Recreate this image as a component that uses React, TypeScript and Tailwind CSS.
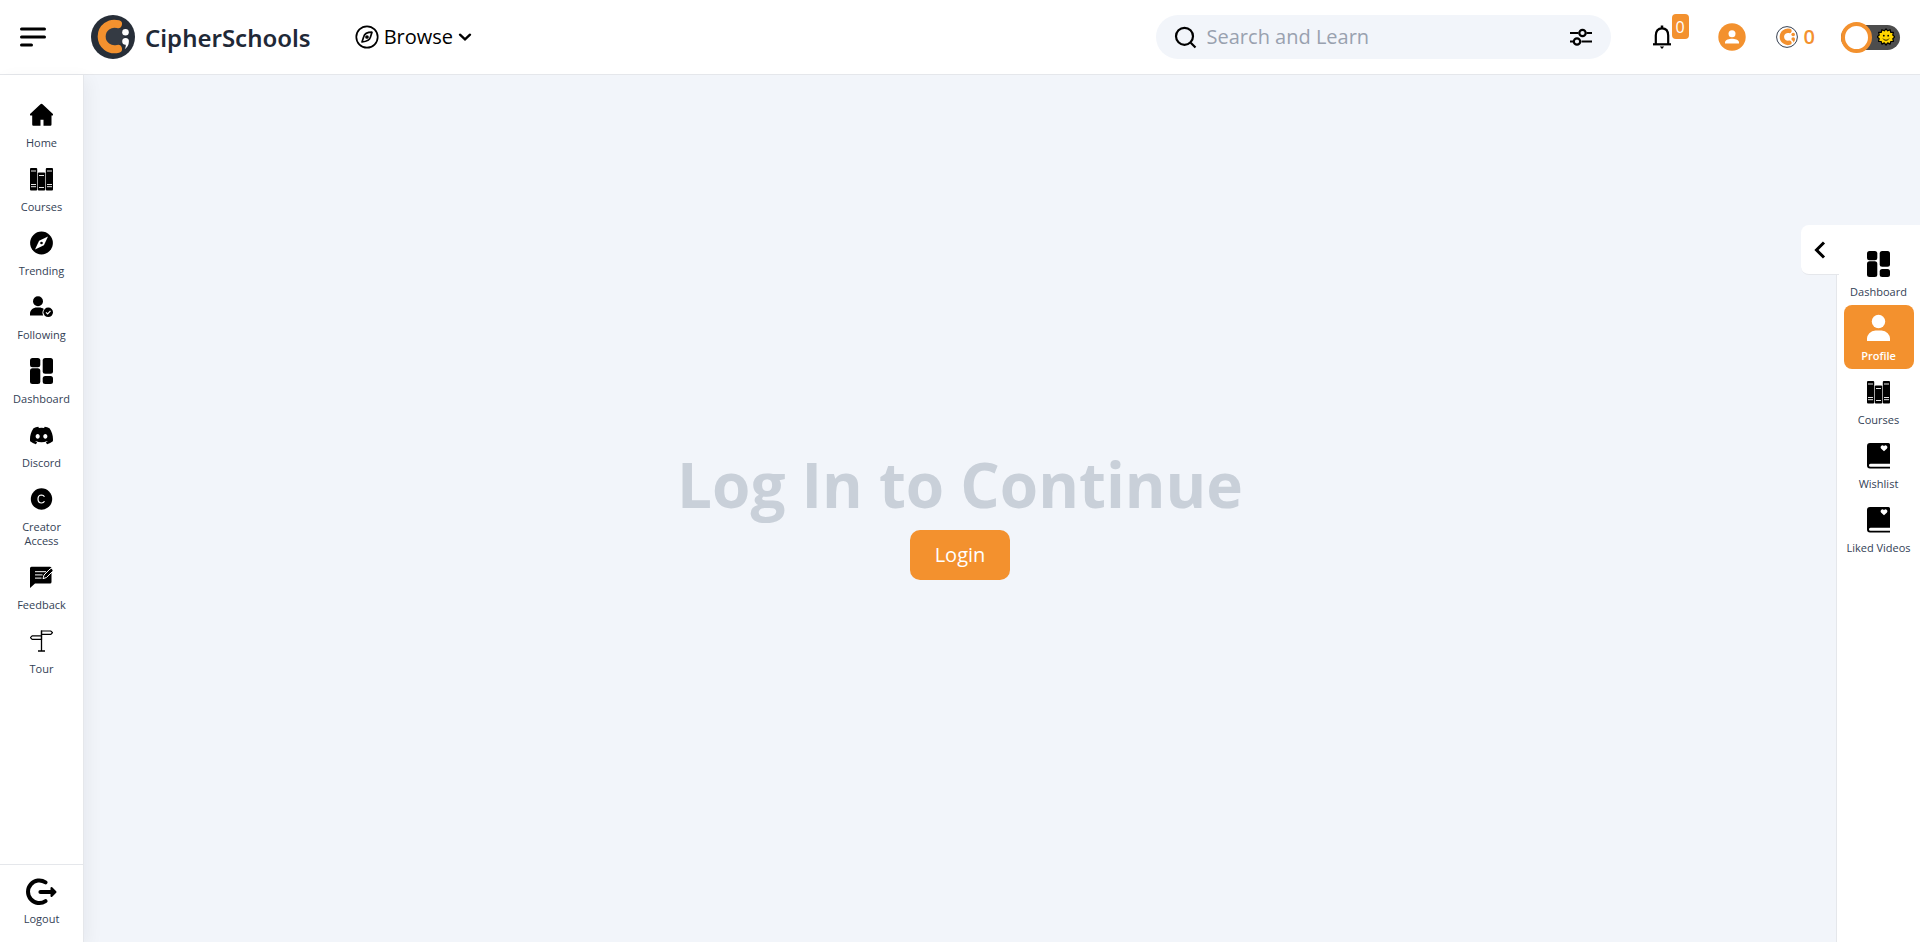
import type { ReactNode } from "react";
import { BsDiscord } from "react-icons/bs";

type Item = { label: string; icon: ReactNode; active?: boolean };

const HomeIcon = () => (
  <svg width="23" height="24" viewBox="0.5 0 23 24" aria-hidden="true">
    <path d="M10.700 1.400a1.900 1.900 0 0 1 2.600 0l9.900 9.400c.6.700.4 1.700-.5 1.700H22v9a1.200 1.200 0 0 1-1.200 1.200H14v-6h-3v6H3.900a1.200 1.200 0 0 1-1.200-1.200v-9h-1.400c-.9 0-1.100-1-.5-1.700z" />
  </svg>
);

const BooksIcon = () => (
  <svg width="23" height="24" viewBox="0.5 0 23 24" aria-hidden="true">
    <rect x="0.500" y="1" width="7.200" height="22.500" rx="1" />
    <rect x="8.300" y="5.500" width="7.400" height="18" rx="1" />
    <rect x="16.300" y="1" width="7.200" height="22.500" rx="1" />
    <path d="M1.500 4h5M17.500 4h5M9.500 8.500h5M1.500 17.500h5M17.500 17.500h5M1.500 19.700h5M17.500 19.700h5M9.500 20.500h5" stroke="#fff" strokeWidth="0.900" />
  </svg>
);

const TrendingIcon = () => (
  <svg width="23" height="24" viewBox="0.5 0 23 24" aria-hidden="true">
    <circle cx="12" cy="12" r="11.400" />
    <path d="M18.500 5.500 14.400 14.300 5.500 18.500 9.600 9.700z" fill="#fff" />
    <circle cx="12" cy="12" r="1.300" />
  </svg>
);

const FollowingIcon = () => (
  <svg width="23" height="24" viewBox="0.5 0 23 24" aria-hidden="true">
    <circle cx="8.500" cy="6.300" r="5" />
    <path d="M.5 20.500v-1.500C.5 15 3.500 12.500 7.500 12.500h2c2 0 3.500.5 4.800 1.500A6 6 0 0 0 13.700 20.500z" />
    <circle cx="18.700" cy="17.300" r="4.800" />
    <path d="m16.500 17.400 1.600 1.500 2.900-3" fill="none" stroke="#fff" strokeWidth="1.200" />
  </svg>
);

const DashboardIcon = () => (
  <svg width="23" height="28" viewBox="0.5 0 23 28" aria-hidden="true">
    <rect x="0.500" y="1" width="10.300" height="9.200" rx="2.500" />
    <rect x="0.500" y="11.300" width="10.300" height="15.700" rx="2.500" />
    <rect x="13.200" y="1" width="10.300" height="15.700" rx="2.500" />
    <rect x="13.200" y="19" width="10.300" height="8" rx="2.500" />
  </svg>
);

const CreatorIcon = () => (
  <svg width="23" height="24" viewBox="0.5 0 23 24" aria-hidden="true">
    <circle cx="12" cy="12" r="10.700" />
    <path d="M15 9.700A3.700 3.700 0 0 0 12.100 8C10 8 8.500 9.600 8.500 12s1.500 4 3.600 4A3.700 3.700 0 0 0 15 14.300" fill="none" stroke="#fff" strokeWidth="1.200" />
  </svg>
);

const FeedbackIcon = () => (
  <svg width="23" height="24" viewBox="0.5 0 23 24" aria-hidden="true">
    <path d="M2 1.700h18.500A1.500 1.500 0 0 1 22 3.200V17a1.500 1.500 0 0 1-1.500 1.500H5.500L.5 23V3.200A1.500 1.500 0 0 1 2 1.700z" />
    <path d="M5.500 6.700h11M5.500 9.900h7.500M5.500 13.100h6.500" stroke="#fff" strokeWidth="1" />
    <path d="m13.500 13.700 1-3.700 6-6a1.700 1.700 0 0 1 2.500 2.500l-6 6z" stroke="#fff" strokeWidth="1" />
  </svg>
);

const TourIcon = () => (
  <svg width="23" height="24" viewBox="0.5 0 23 24" fill="none" stroke="#000" aria-hidden="true">
    <path d="M12 1.500v21M8.500 22h7" strokeWidth="1.300" />
    <path d="M12 2h9.300l1.700 1.700-1.700 1.700H12zM12 6.900H2.700L1 8.600l1.700 1.700H12z" strokeWidth="1.200" />
  </svg>
);

const ProfileIcon = () => (
  <svg width="23" height="28" viewBox="0.5 0 23 28" fill="#fff" aria-hidden="true">
    <circle cx="12" cy="7.500" r="6.700" />
    <path d="M.5 27V25.500A8.500 8.500 0 0 1 9 16.500h6a8.500 8.500 0 0 1 8.500 9V27z" />
  </svg>
);

const BookHeartIcon = () => (
  <svg width="23" height="28" viewBox="0.5 0 23 28" aria-hidden="true">
    <path d="M3.500 1H22a1.500 1.500 0 0 1 1.500 1.500V21.700H4a1.400 1.400 0 0 0 0 3.100h19.500V26.500H3.500a3 3 0 0 1-3-3V4a3 3 0 0 1 3-3z" />
    <path d="M17.500 9.200 14.500 6.500a1.800 1.800 0 0 1 3-2.300 1.800 1.800 0 0 1 3 2.300z" fill="#fff" />
  </svg>
);

const LogoutIcon = () => (
  <svg width="31" height="28" viewBox="0.5 0 31 28" fill="none" stroke="#000" strokeLinecap="round" aria-hidden="true">
    <path d="M20 4.300A11.300 11.300 0 1 0 20 23.200" strokeWidth="4" />
    <path d="M15 14H27" strokeWidth="4.200" />
    <path d="m26 10 4 4-4 4z" fill="#000" strokeWidth="2" strokeLinejoin="round" />
  </svg>
);

const Logo = () => (
  <svg width="44" height="44" viewBox="0 0 44 44" aria-hidden="true">
    <circle cx="22" cy="22" r="22" fill="#272e38" />
    <circle cx="23" cy="21.500" r="10" fill="#343a43" />
    <path d="M27 9.200A12.800 12.800 0 1 0 27 33.800" fill="none" stroke="#f3912e" strokeWidth="8" strokeLinecap="round" />
    <circle cx="34.500" cy="17.300" r="3.300" fill="#fff" />
    <path d="M34.500 23a3.400 3.400 0 0 1 3.400 3.600c0 3.400-1.700 6-4.200 7.700.9-1.700 1.300-3.200 1-4.500a3.400 3.400 0 0 1-.2-6.800z" fill="#fff" />
  </svg>
);

const CoinIcon = () => (
  <svg width="22" height="22" viewBox="0 0 22 22" aria-hidden="true">
    <circle cx="11" cy="11" r="10.400" fill="#fff" stroke="#374151" strokeWidth="1" />
    <path d="M13.500 4.900A6.100 6.100 0 1 0 13.500 16.700" fill="none" stroke="#f3912e" strokeWidth="4.400" strokeLinecap="round" />
    <circle cx="17.200" cy="8.500" r="1.800" fill="#f3912e" />
    <path d="M17.200 11.300a1.800 1.800 0 0 1 1.800 1.800c0 1.800-.8 2.800-2.300 3.700.5-1 .6-1.500.5-1.900a1.800 1.800 0 0 1 0-3.600z" fill="#f3912e" />
  </svg>
);

const SunIcon = () => (
  <svg width="18" height="18" viewBox="0 0 18 18" aria-hidden="true">
    <path
      d="M9 .8l1.700 2 2.400-1.100.6 2.600 2.700.1-.6 2.600 2 1.900-2 1.800.7 2.600-2.700.2-.7 2.600-2.400-1.200L9 17l-1.700-2.100-2.400 1.200-.7-2.600-2.700-.2.700-2.600-2-1.800 2-1.900-.6-2.600 2.700-.1.600-2.600 2.400 1.100z"
      fill="#ffd500"
      stroke="#000"
      strokeWidth="1.200"
      strokeLinejoin="round"
    />
    <circle cx="6.800" cy="7.700" r="0.900" />
    <circle cx="11.200" cy="7.700" r="0.900" />
    <path d="M6 10.700c1.500 2 4.500 2 6 0" fill="none" stroke="#000" strokeWidth="0.900" />
  </svg>
);

const leftItems: Item[] = [
  { label: "Home", icon: <HomeIcon /> },
  { label: "Courses", icon: <BooksIcon /> },
  { label: "Trending", icon: <TrendingIcon /> },
  { label: "Following", icon: <FollowingIcon /> },
  { label: "Dashboard", icon: <DashboardIcon /> },
  { label: "Discord", icon: <BsDiscord size={23} /> },
  { label: "Creator Access", icon: <CreatorIcon /> },
  { label: "Feedback", icon: <FeedbackIcon /> },
  { label: "Tour", icon: <TourIcon /> },
];

const rightItems: Item[] = [
  { label: "Dashboard", icon: <DashboardIcon /> },
  { label: "Profile", icon: <ProfileIcon />, active: true },
  { label: "Courses", icon: <BooksIcon /> },
  { label: "Wishlist", icon: <BookHeartIcon /> },
  { label: "Liked Videos", icon: <BookHeartIcon /> },
];

function NavLink({ item }: { item: Item }) {
  return (
    <a
      href="#"
      className={
        item.active
          ? "flex min-h-16 w-[70px] flex-col items-center rounded-lg bg-[#f3912e] pt-[9px] pb-1.5 text-center text-[11px] leading-[14px] font-semibold text-white"
          : "flex min-h-16 w-[70px] flex-col items-center rounded-lg pt-[9px] pb-1.5 text-center text-[11px] leading-[14px] text-[#334155]"
      }
    >
      <span className="flex h-7 items-center text-black">{item.icon}</span>
      <span className="mt-[7px]">{item.label}</span>
    </a>
  );
}

export default function App() {
  return (
    <div className="flex min-h-screen flex-col bg-[#f2f5fa] font-['Open_Sans',sans-serif] text-black">
      <header className="flex h-[75px] items-center border-b border-gray-200 bg-white px-5">
        <button type="button" aria-label="Toggle menu" className="mr-11">
          <svg width="27" height="20" viewBox="0 0 27 20" stroke="#000" strokeWidth="3" strokeLinecap="round" aria-hidden="true">
            <path d="M1.500 2h23M1.500 10h23M1.500 18h10" />
          </svg>
        </button>
        <a href="#" className="flex items-center gap-[10px]">
          <Logo />
          <span className="pt-[2px] text-2xl leading-8 font-semibold text-[#1f2937] font-['Noto_Sans',sans-serif]">CipherSchools</span>
        </a>
        <button type="button" className="ml-11 flex items-center gap-[5px] text-xl">
          <svg width="24" height="24" viewBox="0 0 24 24" fill="none" stroke="#000" strokeWidth="1.700" aria-hidden="true">
            <circle cx="12" cy="12" r="10.700" />
            <path d="M17 7.200c-3.800 0-7.500 1.300-8.300 4.600L7 17c4.400-.5 7.700-1.600 8.300-4.600z" strokeLinejoin="round" />
            <circle cx="12" cy="12" r="1" />
          </svg>
          <span>Browse</span>
          <svg width="14" height="14" viewBox="0 0 14 14" fill="none" stroke="#000" strokeWidth="2.400" strokeLinecap="round" aria-hidden="true">
            <path d="m2 4.700 5 4.600 5-4.600" />
          </svg>
        </button>
        <div className="ml-auto flex items-center">
          <form className="flex h-11 w-[455px] items-center rounded-full bg-[#f2f5fa] pr-[19px] pl-[18px]">
            <svg width="23" height="23" viewBox="0 0 23 23" fill="none" stroke="#000" strokeWidth="2.200" aria-hidden="true">
              <circle cx="10.500" cy="10.300" r="8.500" />
              <path d="m16.700 16.700 4.800 4.800" />
            </svg>
            <input
              type="text"
              aria-label="Search"
              placeholder="Search and Learn"
              className="ml-[10px] min-w-0 flex-1 bg-transparent text-xl outline-none placeholder:text-gray-400"
            />
            <button type="button" aria-label="Filters">
              <svg width="22" height="18" viewBox="0 0 22 18" fill="none" stroke="#000" strokeWidth="2.200" aria-hidden="true">
                <path d="M0 5h8.500M16.500 5H22M0 13.500h3.500M11.500 13.500H22" />
                <circle cx="12.500" cy="5" r="3.200" />
                <circle cx="7" cy="13.500" r="3.200" />
              </svg>
            </button>
          </form>
          <button type="button" aria-label="Notifications" className="relative ml-[41px]">
            <svg width="20" height="24" viewBox="0 0 20 24" fill="none" stroke="#000" strokeWidth="2.200" aria-hidden="true">
              <path d="M3.800 19v-8.500C3.800 6 6 3.300 10 3.300s6.200 2.700 6.200 7.200V19" />
              <path d="M1 19.300h18" />
              <path d="M7.800 21.500h4.400L10 24z" fill="#000" stroke="none" />
              <path d="M10 .5v2.500" strokeWidth="2.500" />
            </svg>
            <span className="absolute -top-[11px] left-5 flex h-[25px] w-[17px] items-center justify-center rounded-sm bg-[#f3912e] text-base text-white">
              0
            </span>
          </button>
          <button type="button" aria-label="Account" className="ml-[46px]">
            <svg width="28" height="28" viewBox="0 0 28 28" aria-hidden="true">
              <circle cx="14" cy="14" r="13.700" fill="#f3912e" />
              <circle cx="14" cy="10.700" r="3.500" fill="#fff" />
              <path d="M7 20.500v-1.200c0-2.500 4.500-3.600 7-3.600s7 1.100 7 3.600v1.200z" fill="#fff" />
            </svg>
          </button>
          <div className="ml-[30px] flex items-center gap-[6px] text-xl font-semibold text-[#f3912e]">
            <CoinIcon />
            <span>0</span>
          </div>
          <button
            type="button"
            role="switch"
            aria-checked="false"
            aria-label="Dark mode"
            className="ml-[26px] flex h-[25px] w-[59px] items-center justify-between rounded-full bg-[#4d4d4d] pr-[5px]"
          >
            <span className="size-[31px] rounded-full border-4 border-[#f3912e] bg-white" />
            <SunIcon />
          </button>
        </div>
      </header>

      <div className="flex flex-1">
        <aside className="z-10 flex w-21 flex-col border-r border-gray-200 bg-white shadow-[4px_4px_16px_rgba(15,23,42,0.05)]">
          <nav className="flex flex-1 flex-col items-center pt-[17px]">
            {leftItems.map((item) => (
              <NavLink key={item.label} item={item} />
            ))}
          </nav>
          <a href="#" className="flex h-[78px] flex-col items-center border-t border-gray-200 pt-[13px] text-[11px] leading-[14px] text-[#334155]">
            <LogoutIcon />
            <span className="mt-[6px]">Logout</span>
          </a>
        </aside>

        <main className="flex flex-1 flex-col items-center justify-center pb-1">
          <h1 className="pt-1 text-[62px] leading-23 font-bold text-[#c9d0d9]">Log In to Continue</h1>
          <button type="button" className="h-[50px] w-[100px] rounded-[10px] bg-[#f3912e] text-xl text-white">
            Login
          </button>
        </main>

        <aside className="relative mt-[150px] w-21 border-l border-gray-200 bg-white">
          <button
            type="button"
            aria-label="Expand panel"
            className="absolute top-0 -left-9 flex h-[50px] w-[38px] items-center justify-center rounded-l-lg border-b border-gray-200 bg-white"
          >
            <svg width="12" height="18" viewBox="0 0 12 18" fill="none" stroke="#000" strokeWidth="3" aria-hidden="true">
              <path d="m10 1.500-7.500 7.500 7.500 7.500" />
            </svg>
          </button>
          <nav className="flex flex-col items-center pt-4">
            {rightItems.map((item) => (
              <NavLink key={item.label} item={item} />
            ))}
          </nav>
        </aside>
      </div>
    </div>
  );
}
